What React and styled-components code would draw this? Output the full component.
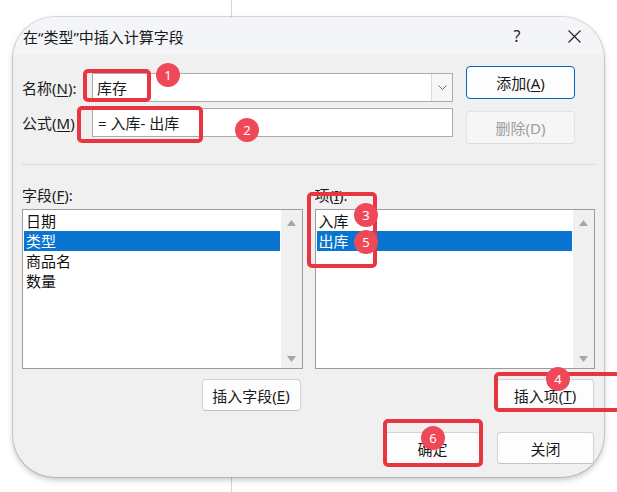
import React from "react";
import styled, { createGlobalStyle } from "styled-components";

const GlobalStyle = createGlobalStyle`
  html, body {
    margin: 0;
    padding: 0;
    background: #fff;
  }
  body {
    font-family: "Noto Sans", "Noto Sans CJK SC", sans-serif;
    color: #1a1a1a;
  }
`;

const RED = "#e93541";

const Page = styled.div`
  position: relative;
  width: 617px;
  height: 492px;
  box-sizing: border-box;
  padding: 17px 13px 15px 13px;
  background: linear-gradient(
      to right,
      transparent 231px,
      #d6d6d6 231px,
      #d6d6d6 232px,
      transparent 232px
    ),
    #fff;
`;

const Frame = styled.div`
  width: 591px;
  height: 460px;
  border-radius: 42px;
  overflow: hidden;
  background: #f0f0f0;
  box-shadow: 0 0 0 1px rgba(0, 0, 0, 0.14), 0 3px 6px rgba(0, 0, 0, 0.22);
  display: flex;
  flex-direction: column;
`;

const TitleBar = styled.div`
  height: 38px;
  flex: none;
  display: flex;
  align-items: center;
  padding: 0 15px 0 10px;
  background: #f4f5f8;
  font-size: 15px;
`;

const Controls = styled.div`
  margin-left: auto;
  display: flex;
  gap: 27px;
`;

const Control = styled.div`
  width: 30px;
  height: 24px;
  display: flex;
  align-items: center;
  justify-content: center;
  font-size: 16px;
  color: #222;
`;

const Body = styled.div`
  flex: 1;
  padding: 11px 9px 13px 9px;
  display: flex;
  flex-direction: column;
`;

const Top = styled.div`
  display: flex;
  align-items: flex-start;
`;

const Fields = styled.div`
  margin-top: 7px;
  display: grid;
  grid-template-columns: 70px 361px;
  grid-auto-rows: 29px;
  row-gap: 6px;
  align-items: center;
`;

const Label = styled.div`
  font-size: 15px;
  line-height: 20px;
  white-space: nowrap;
`;

const Input = styled.div`
  height: 29px;
  box-sizing: border-box;
  border: 1px solid #ababab;
  background: #fff;
  display: flex;
  align-items: center;
  font-size: 15px;
  padding-left: ${(p) => p.$inset}px;
`;

const InputText = styled.span`
  flex: 1;
  white-space: pre;
`;

const DropButton = styled.div`
  width: 21px;
  height: 100%;
  box-sizing: border-box;
  border-left: 1px solid #dcdcdc;
  background: #f7f7f7;
  display: flex;
  align-items: center;
  justify-content: center;
`;

const SideButtons = styled.div`
  margin-left: 13px;
  display: flex;
  flex-direction: column;
  gap: 12px;
`;

const Button = styled.div`
  width: ${(p) => p.$w}px;
  height: ${(p) => p.$h || 32}px;
  box-sizing: border-box;
  border-radius: 4px;
  border: 1px solid ${(p) => (p.$primary ? "#0067c0" : p.$disabled ? "#e2e2e2" : "#d2d2d2")};
  border-bottom-color: ${(p) => (p.$primary ? "#0067c0" : p.$disabled ? "#dcdcdc" : "#c2c2c2")};
  background: ${(p) => (p.$disabled ? "#f6f6f6" : "#fdfdfd")};
  color: ${(p) => (p.$disabled ? "#9d9d9d" : "#1a1a1a")};
  display: flex;
  align-items: center;
  justify-content: center;
  font-size: 15px;
  white-space: nowrap;
`;

const U = styled.span`
  text-decoration: underline;
  text-underline-offset: 2px;
  text-decoration-thickness: 1px;
`;

const Separator = styled.div`
  margin-top: 20px;
  height: 1px;
  background: #d9d9d9;
`;

const Lists = styled.div`
  margin-top: 20px;
  display: grid;
  grid-template-columns: 1fr 1fr;
  column-gap: 12px;
`;

const Column = styled.div`
  display: flex;
  flex-direction: column;
`;

const ListBox = styled.div`
  margin-top: 4px;
  height: 160px;
  box-sizing: border-box;
  border: 1px solid #9c9c9c;
  background: #fff;
  display: flex;
`;

const Rows = styled.div`
  flex: 1;
  padding: 1px;
`;

const Row = styled.div`
  height: 20px;
  line-height: 20px;
  padding-left: 2px;
  font-size: 15px;
  background: ${(p) => (p.$selected ? "#0a74d1" : "transparent")};
  color: ${(p) => (p.$selected ? "#fff" : "#111")};
`;

const ScrollBar = styled.div`
  width: 21px;
  background: #f0f0f0;
  display: flex;
  flex-direction: column;
  align-items: center;
  justify-content: space-between;
  padding: 10px 0 6px;
`;

const ColumnButton = styled.div`
  margin-top: 10px;
  align-self: flex-end;
  margin-right: ${(p) => p.$offset}px;
`;

const Footer = styled.div`
  margin-top: 21px;
  display: flex;
  justify-content: flex-end;
  gap: 16px;
  padding-right: 1px;
`;

const Mark = styled.div`
  position: absolute;
  left: ${(p) => p.$x}px;
  top: ${(p) => p.$y}px;
  width: ${(p) => p.$w}px;
  height: ${(p) => p.$h}px;
  box-sizing: border-box;
  border: 4px solid ${RED};
  border-radius: 5px;
`;

const Badge = styled.div`
  position: absolute;
  left: ${(p) => p.$cx - 12}px;
  top: ${(p) => p.$cy - 12}px;
  width: 24px;
  height: 24px;
  border-radius: 50%;
  background: #ef4859;
  color: #fff;
  font-family: "Noto Sans", sans-serif;
  font-size: 13px;
  line-height: 24px;
  text-align: center;
`;

const Triangle = ({ up }) => (
  <svg width="9" height="6" viewBox="0 0 9 6">
    <polygon points={up ? "4.5,0 9,6 0,6" : "0,0 9,0 4.5,6"} fill="#a6a6a6" />
  </svg>
);

const List = ({ items, selected }) => (
  <ListBox>
    <Rows>
      {items.map((item) => (
        <Row key={item} $selected={item === selected}>
          {item}
        </Row>
      ))}
    </Rows>
    <ScrollBar>
      <Triangle up />
      <Triangle />
    </ScrollBar>
  </ListBox>
);

const marks = [
  { x: 83, y: 69, w: 68, h: 33 },
  { x: 77, y: 106, w: 126, h: 37 },
  { x: 307, y: 192, w: 70, h: 76 },
  { x: 494, y: 372, w: 130, h: 40 },
  { x: 383, y: 419, w: 100, h: 48 },
];

const badges = [
  { n: 1, cx: 168, cy: 75 },
  { n: 2, cx: 247, cy: 130 },
  { n: 3, cx: 366, cy: 215 },
  { n: 5, cx: 366, cy: 242 },
  { n: 4, cx: 558, cy: 379 },
  { n: 6, cx: 433, cy: 438 },
];

export default function App() {
  return (
    <>
      <GlobalStyle />
      <Page>
        <Frame>
          <TitleBar>
            <span>在“类型”中插入计算字段</span>
            <Controls>
              <Control>?</Control>
              <Control>
                <svg width="13" height="13" viewBox="0 0 13 13">
                  <path d="M0.5 0.5 L12.5 12.5 M12.5 0.5 L0.5 12.5" stroke="#222" strokeWidth="1.1" />
                </svg>
              </Control>
            </Controls>
          </TitleBar>
          <Body>
            <Top>
              <Fields>
                <Label>
                  名称(<U>N</U>):
                </Label>
                <Input $inset={4}>
                  <InputText>库存</InputText>
                  <DropButton>
                    <svg width="9" height="5" viewBox="0 0 9 5">
                      <path d="M0.5 0.5 L4.5 4.5 L8.5 0.5" fill="none" stroke="#6a6a6a" strokeWidth="1" />
                    </svg>
                  </DropButton>
                </Input>
                <Label>
                  公式(<U>M</U>)
                </Label>
                <Input $inset={5}>
                  <InputText>= 入库- 出库</InputText>
                </Input>
              </Fields>
              <SideButtons>
                <Button $w={109} $h={33} $primary>
                  添加(<U>A</U>)
                </Button>
                <Button $w={109} $h={33} $disabled>
                  删除(D)
                </Button>
              </SideButtons>
            </Top>
            <Separator />
            <Lists>
              <Column>
                <Label>
                  字段(<U>F</U>):
                </Label>
                <List items={["日期", "类型", "商品名", "数量"]} selected="类型" />
                <ColumnButton $offset={2}>
                  <Button $w={99}>
                    插入字段(<U>E</U>)
                  </Button>
                </ColumnButton>
              </Column>
              <Column>
                <Label>
                  项(<U>I</U>):
                </Label>
                <List items={["入库", "出库"]} selected="出库" />
                <ColumnButton $offset={1}>
                  <Button $w={98}>
                    插入项(<U>T</U>)
                  </Button>
                </ColumnButton>
              </Column>
            </Lists>
            <Footer>
              <Button $w={97}>确定</Button>
              <Button $w={97}>关闭</Button>
            </Footer>
          </Body>
        </Frame>
        {marks.map((m, i) => (
          <Mark key={i} $x={m.x} $y={m.y} $w={m.w} $h={m.h} />
        ))}
        {badges.map((b) => (
          <Badge key={b.n} $cx={b.cx} $cy={b.cy}>
            {b.n}
          </Badge>
        ))}
      </Page>
    </>
  );
}
